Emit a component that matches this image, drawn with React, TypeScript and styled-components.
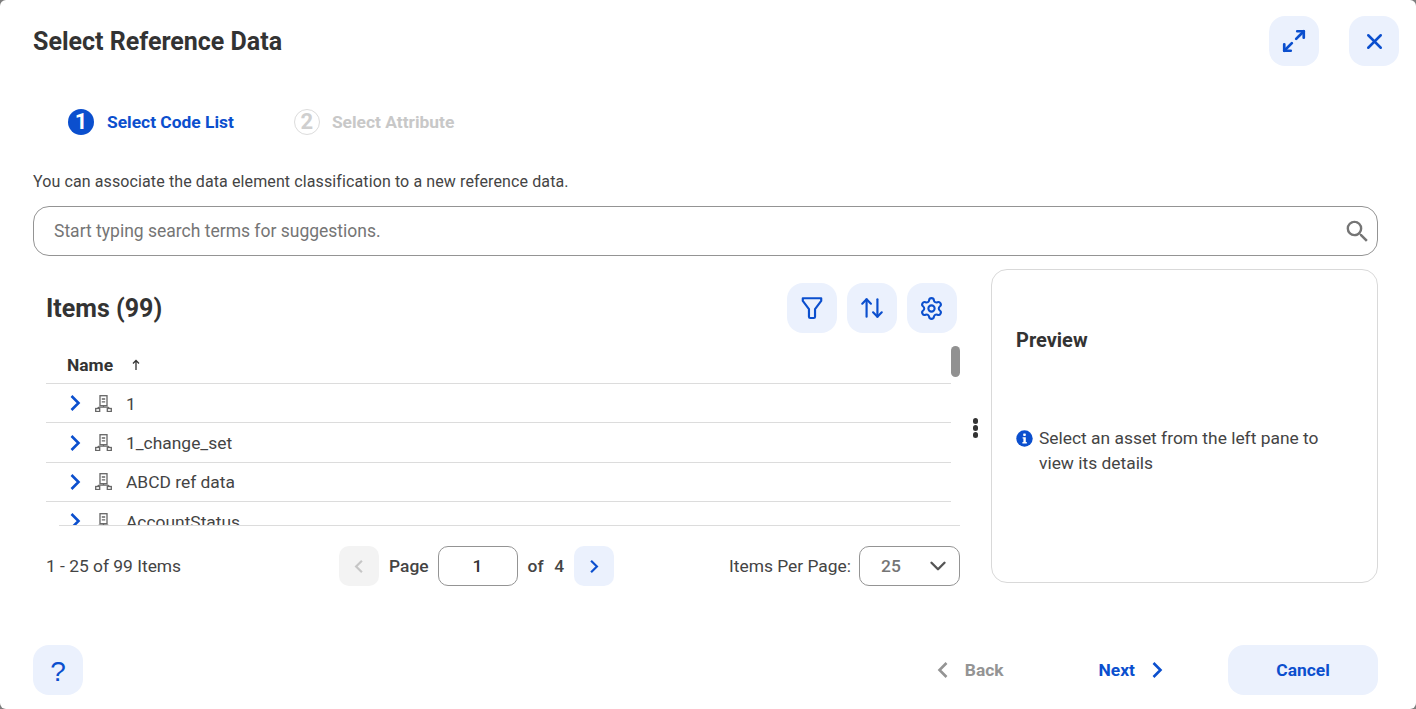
import React from "react";
import styled, { createGlobalStyle } from "styled-components";
import { ChevronDown, Maximize2, X, ArrowUpDown, Settings } from "lucide-react";
import { MdSearch } from "react-icons/md";

const Global = createGlobalStyle`
  html, body { margin: 0; padding: 0; background: #7d7d7d; height: 100%; overflow: hidden; }
  body { font-family: Roboto, "Liberation Sans", sans-serif; color: #333; }
  * { box-sizing: border-box; }
`;

const BLUE = "#0b4fce";

const Modal = styled.div`
  width: 1416px; height: 709px; background: #fff; display: flex; flex-direction: column;
  padding: 16px 17px 14px 33px; border-radius: 6px;
`;
const Header = styled.header`
  display: flex; align-items: center; justify-content: space-between; height: 50px;
`;
const Title = styled.h1`
  margin: 2px 0 0; font-size: 25px; font-weight: 700; color: #333; line-height: 48px;
`;
const HeaderActions = styled.div`display: flex; gap: 30px;`;
const IconBtn = styled.button<{ $size?: number; $radius?: number; $disabled?: boolean }>`
  width: ${p => p.$size ?? 50}px; height: ${p => p.$size ?? 50}px; border: 0; padding: 0;
  border-radius: ${p => p.$radius ?? 16}px;
  background: ${p => (p.$disabled ? "#f3f3f3" : "#ebf1fd")};
  color: ${p => (p.$disabled ? "#c6c6c6" : BLUE)};
  display: flex; align-items: center; justify-content: center; flex: none;
`;
const Stepper = styled.div`
  display: flex; align-items: center; gap: 60px; margin: 43px 0 0 35px; height: 26px;
`;
const Step = styled.div<{ $active?: boolean }>`
  display: flex; align-items: center; gap: ${p => (p.$active ? 13 : 12)}px; font-size: 17.4px; font-weight: 700;
  color: ${p => (p.$active ? BLUE : "#c8c8c8")}; line-height: 24px;
`;
const StepDot = styled.span<{ $active?: boolean }>`
  width: 26px; height: 26px; border-radius: 50%; display: flex; align-items: center; justify-content: center;
  font-size: 22px; font-weight: 700;
  background: ${p => (p.$active ? BLUE : "#fff")};
  color: ${p => (p.$active ? "#fff" : "#cfcfcf")};
  border: ${p => (p.$active ? "0" : "1px solid #dcdcdc")};
`;
const Description = styled.p`
  margin: 37px 0 0; font-size: 16px; line-height: 20px; color: #444; letter-spacing: 0.11px;
`;
const SearchBar = styled.div`
  margin-top: 14px; width: 1345px; height: 50px; border: 1px solid #949494; border-radius: 16px;
  display: flex; align-items: center; justify-content: space-between; padding: 0 5px 1px 20px;
  font-size: 17.5px; color: #757575;
`;
const SearchGlyph = styled.span`display: flex; margin-top: 1px; color: #757575;`;
const Content = styled.div`
  margin-top: 13px; display: flex; width: 1345px; height: 314px;
`;
const LeftPane = styled.section`
  width: 927px; padding-left: 13px; display: flex; flex-direction: column; flex: none;
`;
const Toolbar = styled.div`
  display: flex; align-items: center; justify-content: space-between; height: 50px; margin-top: 14px; padding-right: 3.5px; flex: none;
`;
const ItemsTitle = styled.h2`margin: 0; font-size: 25px; font-weight: 700; color: #333;`;
const ToolButtons = styled.div`display: flex; gap: 10px;`;
const TableWrap = styled.div`
  position: relative; height: 179px; margin-top: 13px; overflow: hidden; flex: none;
`;
const Thumb = styled.div`
  position: absolute; right: 0; top: 0; width: 9px; height: 31px; border-radius: 5px; background: #919191;
`;
const Table = styled.div`width: 905px;`;
const HeadRow = styled.div`
  height: 38px; display: flex; align-items: center; padding-left: 21px; gap: 18px;
  font-size: 17.4px; font-weight: 700; color: #333; border-bottom: 1px solid #dcdcdc;
`;
const SortArrow = styled.span`display: flex; color: #333;`;
const Row = styled.div`
  height: 39.4px; display: flex; align-items: center; padding: 1px 0 0 23px; font-size: 17.4px; color: #444;
  border-bottom: 1px solid #dcdcdc;
`;
const ChevronBox = styled.span`display: flex; color: ${BLUE}; margin-top: -1px;`;
const RowIcon = styled.span`display: flex; margin: -1px 14px 0; color: #666;`;
const BottomRule = styled.div`height: 1px; background: #dcdcdc; margin-left: 13px; flex: none;`;
const Pager = styled.div`
  height: 40px; margin-top: 20px; display: flex; align-items: center; font-size: 17.4px; color: #444; white-space: nowrap; flex: none;
`;
const PagerCount = styled.span`width: 293px; flex: none;`;
const PagerGroup = styled.div`display: flex; align-items: center; flex: none;`;
const PageLabel = styled.span`margin: 0 9px 0 10px; font-weight: 500;`;
const PageInput = styled.div`
  width: 80px; height: 40px; border: 1px solid #949494; border-radius: 10px; display: flex;
  align-items: center; justify-content: center; font-weight: 500; color: #333;
`;
const OfLabel = styled.span`margin: 0 10px; white-space: pre; font-weight: 500; word-spacing: 1px;`;
const PerPage = styled.div`
  margin-left: auto; display: flex; align-items: center; gap: 8px; flex: none;
`;
const PerSelect = styled.div`
  width: 101px; height: 40px; border: 1px solid #949494; border-radius: 10px; display: flex;
  align-items: center; justify-content: space-between; padding: 0 8px 0 21px; font-weight: 500; color: #757575;
`;
const Dots = styled.div`
  width: 31px; flex: none; display: flex; flex-direction: column; align-items: center; gap: 1.5px; padding-top: 149px;
`;
const Dot = styled.span`width: 5.5px; height: 5.5px; border-radius: 50%; background: #333;`;
const PreviewPane = styled.aside`
  width: 387px; height: 314px; border: 1px solid #d9d9d9; border-radius: 16px; padding: 58px 24px 0;
`;
const PreviewTitle = styled.h3`margin: 0; font-size: 20px; line-height: 24px; font-weight: 700; color: #333;`;
const PreviewInfo = styled.div`
  margin-top: 74px; display: flex; gap: 6px; font-size: 17.4px; line-height: 25px; color: #444; width: 320px;
`;
const InfoGlyph = styled.span`display: flex; color: ${BLUE}; margin-top: 4px; flex: none;`;
const Footer = styled.footer`
  margin-top: 62px; height: 50px; width: 1345px; display: flex; align-items: center; justify-content: space-between;
`;
const FooterActions = styled.div`display: flex; align-items: center;`;
const TextBtn = styled.button<{ $muted?: boolean; $gap: number; $left?: number }>`
  border: 0; background: none; padding: 0 0 1px; display: flex; align-items: center; gap: ${p => p.$gap}px;
  margin-left: ${p => p.$left ?? 0}px;
  font: 700 17.4px Roboto, sans-serif; color: ${p => (p.$muted ? "#949494" : BLUE)};
`;
const CancelBtn = styled.button`
  width: 150px; height: 50px; border: 0; border-radius: 16px; background: #ebf1fd; color: ${BLUE};
  font: 700 17.4px Roboto, sans-serif; margin-left: 65px; padding: 0 0 1px;
`;
const Help = styled.span`font-size: 28px; color: ${BLUE}; font-weight: 500; padding-top: 3px;`;

const Chevron = ({ left, small }: { left?: boolean; small?: boolean }) => (
  <svg width={small ? 10 : 12} height={small ? 15 : 18} viewBox="0 0 12 18" fill="none" stroke="currentColor" strokeWidth="2.6">
    <path d={left ? "M9.5 2 2.5 9l7 7" : "M2.5 2l7 7-7 7"} />
  </svg>
);

const FunnelIcon = () => (
  <svg width="26" height="26" viewBox="0 0 24 24" fill="none" stroke="currentColor" strokeWidth="2" strokeLinejoin="round">
    <path d="M3.5 3h17v2.5L14.8 13v7a1.2 1.2 0 0 1-1.2 1.2h-3.2A1.2 1.2 0 0 1 9.2 20v-7L3.5 5.5z" />
  </svg>
);

const TreeIcon = () => (
  <svg width="17" height="17" viewBox="0 0 17 17" fill="none" stroke="currentColor" strokeWidth="1.3">
    <rect x="5" y="0.7" width="7" height="10" />
    <path d="M6.8 4h3.4M6.8 6.8h3.4" />
    <path d="M8.5 10.7v1.6M3 13.5v-.6L4.2 12.2h8.6L14 13v.5" />
    <rect x="0.7" y="13.5" width="4" height="3" />
    <rect x="12.3" y="13.5" width="4" height="3" />
  </svg>
);

const InfoIcon = () => (
  <svg width="17" height="17" viewBox="0 0 17 17">
    <circle cx="8.5" cy="8.5" r="8.2" fill="currentColor" />
    <rect x="7.2" y="3.4" width="2.6" height="2.5" rx="0.6" fill="#fff" />
    <path d="M6.6 7.2h3.2v4.8h1v1.4H6.4V12h1V8.6h-.8z" fill="#fff" />
  </svg>
);

const rows = ["1", "1_change_set", "ABCD ref data", "AccountStatus"];

export default function App() {
  return (
    <Modal>
      <Global />
      <Header>
        <Title>Select Reference Data</Title>
        <HeaderActions>
          <IconBtn><Maximize2 size={26} strokeWidth={2.5} /></IconBtn>
          <IconBtn><X size={25} strokeWidth={2.4} /></IconBtn>
        </HeaderActions>
      </Header>
      <Stepper>
        <Step $active><StepDot $active>1</StepDot>Select Code List</Step>
        <Step><StepDot>2</StepDot>Select Attribute</Step>
      </Stepper>
      <Description>You can associate the data element classification to a new reference data.</Description>
      <SearchBar>
        Start typing search terms for suggestions.
        <SearchGlyph><MdSearch size={29} /></SearchGlyph>
      </SearchBar>
      <Content>
        <LeftPane>
          <Toolbar>
            <ItemsTitle>Items (99)</ItemsTitle>
            <ToolButtons>
              <IconBtn><FunnelIcon /></IconBtn>
              <IconBtn><ArrowUpDown size={26} strokeWidth={2} /></IconBtn>
              <IconBtn><Settings size={25} strokeWidth={2} /></IconBtn>
            </ToolButtons>
          </Toolbar>
          <TableWrap>
            <Table>
              <HeadRow>Name<SortArrow>
                <svg width="10" height="12" viewBox="0 0 10 12" fill="none" stroke="currentColor" strokeWidth="1.3"><path d="M5 11V1.5M2 4.5 5 1.5l3 3" /></svg>
              </SortArrow></HeadRow>
              {rows.map(r => (
                <Row key={r}>
                  <ChevronBox><Chevron /></ChevronBox>
                  <RowIcon><TreeIcon /></RowIcon>
                  {r}
                </Row>
              ))}
            </Table>
            <Thumb />
          </TableWrap>
          <BottomRule />
          <Pager>
            <PagerCount>1 - 25 of 99 Items</PagerCount>
            <PagerGroup>
              <IconBtn $size={40} $radius={10} $disabled><Chevron left small /></IconBtn>
              <PageLabel>Page</PageLabel>
              <PageInput>1</PageInput>
              <OfLabel>of  4</OfLabel>
              <IconBtn $size={40} $radius={10}><Chevron small /></IconBtn>
            </PagerGroup>
            <PerPage>
              Items Per Page:
              <PerSelect>25<ChevronDown size={26} color="#555" strokeWidth={2.2} /></PerSelect>
            </PerPage>
          </Pager>
        </LeftPane>
        <Dots><Dot /><Dot /><Dot /></Dots>
        <PreviewPane>
          <PreviewTitle>Preview</PreviewTitle>
          <PreviewInfo>
            <InfoGlyph><InfoIcon /></InfoGlyph>
            <span>Select an asset from the left pane to view its details</span>
          </PreviewInfo>
        </PreviewPane>
      </Content>
      <Footer>
        <IconBtn><Help>?</Help></IconBtn>
        <FooterActions>
          <TextBtn $muted $gap={16}><Chevron left />Back</TextBtn>
          <TextBtn $gap={16} $left={95}>Next<Chevron /></TextBtn>
          <CancelBtn>Cancel</CancelBtn>
        </FooterActions>
      </Footer>
    </Modal>
  );
}
